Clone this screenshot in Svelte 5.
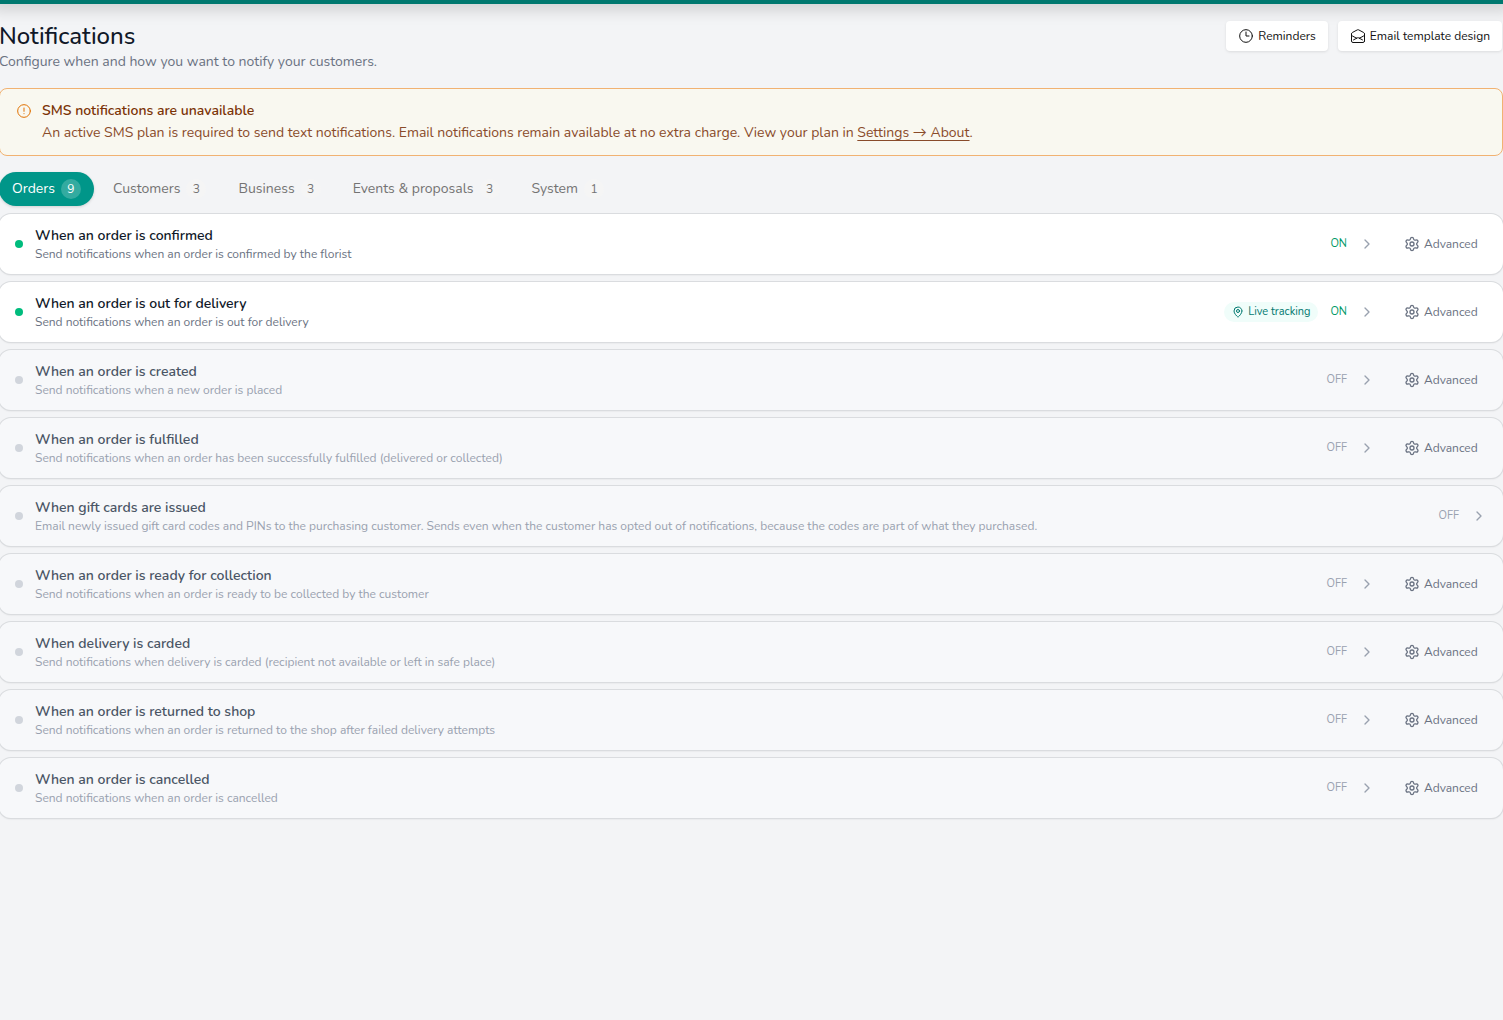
<script>
	let active = $state('Orders');

	const tabs = [
		{ name: 'Orders', count: 9 },
		{ name: 'Customers', count: 3 },
		{ name: 'Business', count: 3 },
		{ name: 'Events & proposals', count: 3 },
		{ name: 'System', count: 1 }
	];

	const rules = [
		{ title: 'When an order is confirmed', text: 'Send notifications when an order is confirmed by the florist', on: true, advanced: true },
		{ title: 'When an order is out for delivery', text: 'Send notifications when an order is out for delivery', on: true, advanced: true, live: true },
		{ title: 'When an order is created', text: 'Send notifications when a new order is placed', advanced: true },
		{ title: 'When an order is fulfilled', text: 'Send notifications when an order has been successfully fulfilled (delivered or collected)', advanced: true },
		{ title: 'When gift cards are issued', text: 'Email newly issued gift card codes and PINs to the purchasing customer. Sends even when the customer has opted out of notifications, because the codes are part of what they purchased.' },
		{ title: 'When an order is ready for collection', text: 'Send notifications when an order is ready to be collected by the customer', advanced: true },
		{ title: 'When delivery is carded', text: 'Send notifications when delivery is carded (recipient not available or left in safe place)', advanced: true },
		{ title: 'When an order is returned to shop', text: 'Send notifications when an order is returned to the shop after failed delivery attempts', advanced: true },
		{ title: 'When an order is cancelled', text: 'Send notifications when an order is cancelled', advanced: true }
	];
</script>

<div class="topbar"></div>

<main>
	<header>
		<div>
			<h1>Notifications</h1>
			<p class="lead">Configure when and how you want to notify your customers.</p>
		</div>
		<div class="actions">
			<button class="action">
				<svg width="16" height="16" viewBox="0 0 24 24"><path d="M12 6v6h4.5M21.5 12a9.5 9.5 0 1 1-19 0 9.5 9.5 0 0 1 19 0Z" /></svg>
				Reminders
			</button>
			<button class="action">
				<svg width="16" height="16" viewBox="0 0 24 24"><path d="M21.75 9v.9a2.25 2.25 0 0 1-1.18 1.98l-6.48 3.49M2.25 9v.9a2.25 2.25 0 0 0 1.18 1.98l6.48 3.49m8.84 2.51-4.66-2.51m0 0-1.02-.55a2.25 2.25 0 0 0-2.14 0l-1.02.55m0 0-4.66 2.51m16.5 1.62a2.25 2.25 0 0 1-2.25 2.25h-15a2.25 2.25 0 0 1-2.25-2.25V8.84a2.25 2.25 0 0 1 1.18-1.98l7.5-4.04a2.25 2.25 0 0 1 2.14 0l7.5 4.04a2.25 2.25 0 0 1 1.18 1.98v10.66Z" /></svg>
				Email template design
			</button>
		</div>
	</header>

	<section class="notice">
		<svg width="16" height="16" viewBox="0 0 24 24"><circle cx="12" cy="12" r="9.5" /><path d="M12 7.5v5M12 15.9v.2" /></svg>
		<div>
			<h2>SMS notifications are unavailable</h2>
			<p>An active SMS plan is required to send text notifications. Email notifications remain available at no extra charge. View your plan in <a href="#about">Settings → About</a>.</p>
		</div>
	</section>

	<nav>
		{#each tabs as tab}
			<button class="tab" class:active={active === tab.name} onclick={() => (active = tab.name)}>
				{tab.name}
				<span class="count">{tab.count}</span>
			</button>
		{/each}
	</nav>

	<ul>
		{#each rules as rule}
			<li class:on={rule.on}>
				<button class="rule">
					<span class="dot"></span>
					<span class="info">
						<span class="title">{rule.title}</span>
						<span class="text">{rule.text}</span>
					</span>
					{#if rule.live}
						<span class="live">
							<svg width="12" height="12" viewBox="0 0 24 24"><path d="M20 10c0 4.993-5.539 10.193-7.399 11.799a1 1 0 0 1-1.202 0C9.539 20.193 4 14.993 4 10a8 8 0 0 1 16 0" /><circle cx="12" cy="10" r="3" /></svg>
							Live tracking
						</span>
					{/if}
					<span class="status">{rule.on ? 'ON' : 'OFF'}</span>
					<svg class="chevron" width="16" height="16" viewBox="0 0 24 24"><path d="m9 18 6-6-6-6" /></svg>
				</button>
				{#if rule.advanced}
					<button class="advanced">
						<svg width="16" height="16" viewBox="0 0 24 24"><path d="M9.671 4.136a2.34 2.34 0 0 1 4.659 0 2.34 2.34 0 0 0 3.319 1.915 2.34 2.34 0 0 1 2.33 4.033 2.34 2.34 0 0 0 0 3.831 2.34 2.34 0 0 1-2.33 4.033 2.34 2.34 0 0 0-3.319 1.915 2.34 2.34 0 0 1-4.659 0 2.34 2.34 0 0 0-3.32-1.915 2.34 2.34 0 0 1-2.33-4.033 2.34 2.34 0 0 0 0-3.831A2.34 2.34 0 0 1 6.35 6.051a2.34 2.34 0 0 0 3.319-1.915" /><circle cx="12" cy="12" r="3" /></svg>
						Advanced
					</button>
				{/if}
			</li>
		{/each}
	</ul>
</main>

<style>
	:global(body) {
		background: #f3f4f6;
		font-family: Nunito, Lato, sans-serif;
		font-size: 14px;
		line-height: 20px;
	}

	h1,
	h2,
	p,
	ul {
		margin: 0;
		padding: 0;
	}

	button {
		border: none;
		background: none;
		font: inherit;
		cursor: pointer;
	}

	svg {
		flex: none;
		fill: none;
		stroke: currentColor;
		stroke-width: 1.5;
		stroke-linecap: round;
		stroke-linejoin: round;
	}

	.topbar {
		height: 4px;
		background: #00786f;
		box-shadow: 0 -4px 16px 10px rgba(0, 0, 0, 0.15);
	}

	main {
		margin-left: -1px;
		padding: 16px 0;
	}

	header {
		display: flex;
		justify-content: space-between;
		align-items: flex-start;
	}

	h1 {
		font-size: 24px;
		line-height: 32px;
		font-weight: 500;
		color: #101828;
	}

	.lead {
		color: #6a7282;
	}

	.actions {
		display: flex;
		gap: 10px;
		padding: 1px 1px 0 0;
	}

	.action {
		display: flex;
		align-items: center;
		gap: 4px;
		padding: 7px 12px;
		border-radius: 4px;
		background: #fff;
		color: #111;
		font-size: 12px;
		line-height: 16px;
		box-shadow: 0 1px 3px rgba(0, 0, 0, 0.1);
	}

	.notice {
		display: flex;
		gap: 10px;
		margin-top: 16px;
		padding: 12px 16px 10px;
		border: 1px solid #f1b272;
		border-radius: 8px;
		background: #f9f8f0;
		color: #894b2a;
	}

	.notice svg {
		margin-top: 2px;
		color: #e17100;
	}

	h2 {
		font-size: 14px;
		line-height: 20px;
		font-weight: 600;
		color: #7b3306;
	}

	.notice p {
		line-height: 24px;
	}

	.notice a {
		color: inherit;
		text-decoration: underline;
		text-decoration-thickness: 1px;
		text-decoration-skip-ink: none;
		text-underline-offset: 3px;
	}

	nav {
		display: flex;
		gap: 6px;
		margin: 16px 0 8px;
	}

	.tab {
		display: flex;
		align-items: center;
		gap: 6px;
		padding: 7px 13px;
		border-radius: 17px;
		color: #737373;
	}

	.tab.active {
		background: #009689;
		color: #fff;
		box-shadow: 0 1px 3px rgba(0, 0, 0, 0.15);
	}

	.count {
		min-width: 20px;
		border-radius: 10px;
		background: #f5f5f5;
		font-size: 12px;
		text-align: center;
	}

	.active .count {
		background: rgba(255, 255, 255, 0.2);
	}

	ul {
		display: flex;
		flex-direction: column;
		gap: 8px;
		list-style: none;
	}

	li {
		display: flex;
		border-radius: 12px;
		background: #f7f8fa;
		color: #99a1af;
		box-shadow: 0 0 0 1px #dadcdf, 0 1px 2px rgba(0, 0, 0, 0.12);
	}

	li.on {
		background: #fff;
		color: #6a7282;
	}

	.rule {
		display: flex;
		flex: 1;
		align-items: center;
		gap: 12px;
		padding: 12px 16px;
		color: inherit;
		text-align: left;
	}

	.dot {
		width: 8px;
		height: 8px;
		border-radius: 50%;
		background: #d1d5dc;
	}

	.on .dot {
		background: #00bc7d;
	}

	.info {
		display: flex;
		flex: 1;
		flex-direction: column;
	}

	.title {
		font-weight: 600;
		color: #4a5565;
	}

	.on .title {
		color: #101828;
	}

	.text {
		font-size: 12px;
		line-height: 16px;
	}

	.live {
		display: flex;
		align-items: center;
		gap: 4px;
		padding: 0 8px;
		border-radius: 10px;
		background: #f0fdfa;
		color: #00786f;
		font-size: 11px;
		line-height: 20px;
	}

	.live svg {
		stroke-width: 2;
	}

	.status {
		font-size: 11px;
		line-height: 16px;
	}

	.on .status {
		color: #009966;
	}

	.chevron {
		color: #99a1af;
		stroke-width: 2;
	}

	.advanced {
		display: flex;
		align-items: center;
		gap: 4px;
		width: 112px;
		padding: 0 13px;
		color: #6a7282;
		font-size: 12px;
	}

	.advanced svg {
		stroke-width: 2;
	}
</style>
